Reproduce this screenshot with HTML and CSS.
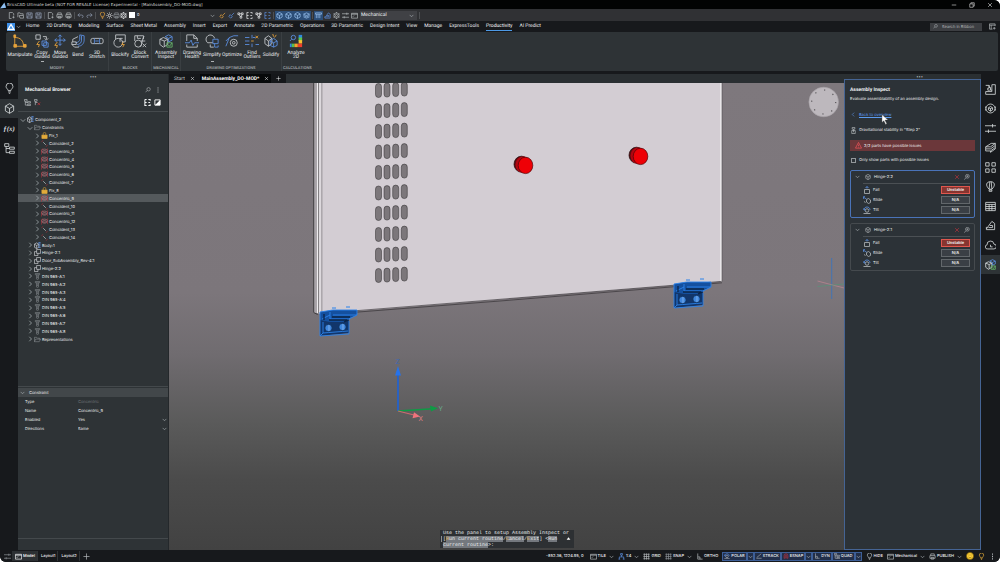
FILE: index.html
```html
<!DOCTYPE html>
<html lang="en">
<head>
<meta charset="utf-8">
<title>BricsCAD Ultimate</title>
<link rel="stylesheet" href="styles.css">
</head>
<body>
<svg class="sprite" aria-hidden="true">
  <defs>
    <symbol id="chev-r" viewBox="0 0 8 8"><path d="M3 1l3 3-3 3"/></symbol>
    <symbol id="chev-l" viewBox="0 0 8 8"><path d="M5 1L2 4l3 3"/></symbol>
    <symbol id="chev-d" viewBox="0 0 8 8"><path d="M1 3l3 3 3-3"/></symbol>
    <symbol id="new" viewBox="0 0 16 16"><path d="M3 1h7l3 3v4M3 1v14h5M10 12h5M12.500 9.500v5"/></symbol>
    <symbol id="open" viewBox="0 0 16 16"><path d="M2 12V2h5l1 2h6v3M5 8h10v6H7z"/></symbol>
    <symbol id="save" viewBox="0 0 16 16"><path d="M2 2h12v12H2zM5 2v4h6V2M4 14V9h8v5"/></symbol>
    <symbol id="print" viewBox="0 0 16 16"><path d="M4 6V2h8v4M2 6h12v6H2zM5 10h6v4H5z"/></symbol>
    <symbol id="undo" viewBox="0 0 16 16"><path d="M6 3L2 7l4 4M2 7h9c4 0 4 6 0 6"/></symbol>
    <symbol id="redo" viewBox="0 0 16 16"><path d="M10 3l4 4-4 4M14 7H5c-4 0-4 6 0 6"/></symbol>
    <symbol id="bulb" viewBox="0 0 16 16"><path d="M6 11c0-2-3-3-3-6a5 5 0 0 1 10 0c0 3-3 4-3 6zM6 13h4M7 15h2"/></symbol>
    <symbol id="sun" viewBox="0 0 16 16"><circle cx="8" cy="8" r="3"/><path d="M8 1v2M8 13v2M1 8h2M13 8h2M3 3l1.500 1.500M11.500 11.500L13 13M13 3l-1.500 1.500M4.500 11.500L3 13"/></symbol>
    <symbol id="lock" viewBox="0 0 16 16"><path d="M5 7V4a3 3 0 0 1 6 0v3"/><rect x="2" y="7" width="12" height="8" fill="currentColor"/></symbol>
    <symbol id="brush" viewBox="0 0 16 16"><path d="M14 2L8 8M5 6l5 5-4 3-4-4z"/></symbol>
    <symbol id="nodes" viewBox="0 0 16 16"><path d="M2 2h4v4H2zM10 2h4v4h-4zM7 10h4v4H7zM6 4h4M4 6l4 4M12 6l-3 4"/></symbol>
    <symbol id="scale" viewBox="0 0 16 16"><path d="M6 1h4v4H6zM8 5v4M3 14V9h10v5M1 14h4M11 14h4"/></symbol>
    <symbol id="ortho" viewBox="0 0 16 16"><path d="M4 1v13h11M4 9h5v5"/></symbol>
    <symbol id="track" viewBox="0 0 16 16"><path d="M1 14h14M2 12L14 2"/></symbol>
    <symbol id="magnet" viewBox="0 0 16 16"><path d="M3 14V7a5 5 0 0 1 10 0v7h-3V7a2 2 0 0 0-4 0v7z"/></symbol>
    <symbol id="cube" viewBox="0 0 16 16"><path d="M8 1l6 3.500v7L8 15l-6-3.500v-7zM2 4.500L8 8l6-3.500M8 8v7"/></symbol>
    <symbol id="bars" viewBox="0 0 16 16"><path d="M1 2h14v3H1zM3 5v9M7 5v9M11 5v9"/></symbol>
    <symbol id="stack" viewBox="0 0 16 16"><path d="M1 5l7-3 7 3-7 3zM1 8l7 3 7-3M1 11l7 3 7-3"/></symbol>
    <symbol id="gear" viewBox="0 0 16 16"><circle cx="8" cy="8" r="6"/><circle cx="8" cy="8" r="2.500"/><path d="M8 0v3M8 13v3M1 4l3 2M12 10l3 2M15 4l-3 2M4 10l-3 2"/></symbol>
    <symbol id="sliders" viewBox="0 0 16 16"><path d="M0 4h16M0 12h16M11 1.500v5M5 9.500v5"/></symbol>
    <symbol id="screen" viewBox="0 0 16 16"><path d="M1 3h14v11H1zM4 11l3-3M1 5h14"/></symbol>
    <symbol id="search" viewBox="0 0 16 16"><circle cx="9.500" cy="6" r="4.500"/><path d="M6 9l-4.500 5"/></symbol>
    <symbol id="ribbon-cfg" viewBox="0 0 16 16"><path d="M8 14H1V2h13v5M1 5h13M5 5v9M12 9v6M9 12h6"/></symbol>
    <symbol id="tree" viewBox="0 0 16 16"><path d="M1 1h6v4H1zM8 6h7v3H8zM8 12h7v3H8zM3 5v9h5M3 8h5"/></symbol>
    <symbol id="tree-x" viewBox="0 0 16 16"><path d="M1 1h6v4H1zM3 5v9M3 8h5"/><path class="red" d="M8 8l6 6M14 8l-6 6"/></symbol>
    <symbol id="sort" viewBox="0 0 16 16"><path d="M2 1h4M2 1v14h4M2 8h4M10 1h4v3M10 8h4M10 15h4v-3"/></symbol>
    <symbol id="dots" viewBox="0 0 16 16"><path d="M8 1v3M8 6.500v3M8 12v3"/></symbol>
    <symbol id="folder" viewBox="0 0 16 16"><path d="M1 13V3h5l2 2h5v3M1 13l3-6h11l-3 6z"/></symbol>
    <symbol id="coin" viewBox="0 0 16 16"><path class="red" d="M1 4l4-3M11 15l4-3"/><path d="M5 5l6 6"/></symbol>
    <symbol id="conc" viewBox="0 0 16 16"><path class="red" d="M1 15V4l3-3M15 1v13"/><ellipse cx="8" cy="6" rx="6" ry="3.500"/><path d="M2 8c0 5 12 5 12 0M5 6h6"/></symbol>
    <symbol id="parts" viewBox="0 0 16 16"><path d="M6 1h9v9H6zM1 6h5M1 6v9h8v-5"/></symbol>
    <symbol id="body" viewBox="0 0 16 16"><path d="M1 5l5-3 5 3v7l-5 3-5-3zM1 5l5 3 5-3M6 8v7"/><path class="blue thick" d="M10 2h5M10 7h5M10 12h5"/></symbol>
    <symbol id="screw" viewBox="0 0 16 16"><path d="M3 1h10v3H3zM6 4v10l2 1 2-1V4M6 7h4M6 10h4"/></symbol>
    <symbol id="assy" viewBox="0 0 16 16"><path d="M1 6l4-2 5 2v6l-5 3-4-3zM1 6l5 2 4-2M6 8v6"/><path class="blue" d="M7 3l4-2 4 2v4l-4 2M7 3l4 2 4-2M11 5v4"/><path class="green" d="M9 10h6v5H9zM10 12l2 2 3-4"/></symbol>
    <symbol id="puzzle" viewBox="0 0 16 16"><path d="M1 2h5v4H4v3h3M10 1h5v14H1v-4h9zM6 2v3h2v4h2"/></symbol>
    <symbol id="wheel" viewBox="0 0 16 16"><circle cx="8" cy="8" r="6.500"/><path d="M8 5l3 2v3l-3 2-3-2V7zM8 8v4M5 7l3 1 3-1M1 5L0 8l1 3M15 5l1 3-1 3"/></symbol>
    <symbol id="clip" viewBox="0 0 16 16"><path d="M1 7l8-5h6l-7 5zM1 7v3h7l7-5V2M1 10v3h7l7-5V5M8 13v2l7-5V8"/></symbol>
    <symbol id="grid4" viewBox="0 0 16 16"><path d="M1 1h5v5H1zM10 1h5v5h-5zM1 10h5v5H1zM10 10h5v5h-5z"/></symbol>
    <symbol id="balloon" viewBox="0 0 16 16"><path d="M6 12C0 6 2 1 8 1s8 5 2 11zM6 12l1-11M10 12L9 1M6 13h4v2H6z"/></symbol>
    <symbol id="table" viewBox="0 0 16 16"><path d="M1 2h14v12H1zM1 5h14M1 8h14M1 11h14M6 5v9M10 5v9"/></symbol>
    <symbol id="hash" viewBox="0 0 16 16"><path d="M1 3h14M1 8h14M1 13h14M3 1v14M8 1v14M13 1v14"/></symbol>
    <symbol id="clipper" viewBox="0 0 16 16"><path d="M2 13L10 2l4 3v9H2zM5 11h6M7 8h4v3M2 13v-3"/></symbol>
    <symbol id="cloud" viewBox="0 0 16 16"><path d="M4 13a3 3 0 0 1-1-6 5 5 0 0 1 10-1 3.500 3.500 0 0 1 0 7zM8 7v3h3"/></symbol>
    <symbol id="magnify" viewBox="0 0 16 16"><circle cx="9" cy="6" r="5"/><path d="M5 10l-4 5M9 3.500v5M6.500 6h5"/></symbol>
    <symbol id="cross" viewBox="0 0 16 16"><path d="M3 3l10 10M13 3L3 13"/></symbol>
    <symbol id="plus" viewBox="0 0 16 16"><path d="M8 1v14M1 8h14"/></symbol>
    <symbol id="min" viewBox="0 0 16 16"><path d="M2 8h12"/></symbol>
    <symbol id="restore" viewBox="0 0 16 16"><path d="M2 5h9v9H2zM5 5V2h9v9h-3"/></symbol>
    <symbol id="warn" viewBox="0 0 16 16"><path d="M8 1l7 13H1zM8 6v4M8 11.500v1"/></symbol>
    <symbol id="gravity" viewBox="0 0 16 16"><path d="M5 1h6v4H5zM4 8h8v7H4zM8 5v7"/></symbol>
    <symbol id="fall" viewBox="0 0 16 16"><path d="M3 7h10v8H3z"/><path class="blue" d="M5 4l3-3 3 3M8 1v4"/></symbol>
    <symbol id="slide" viewBox="0 0 16 16"><path d="M7 7l4-2 4 3v5l-4 2-4-3zM2 11l3 2"/><path class="blue" d="M0 2l7 4M4 1L0 2l1 4"/></symbol>
    <symbol id="tilt" viewBox="0 0 16 16"><circle cx="8" cy="9" r="3.500"/><path d="M1 15h14"/><path class="blue" d="M2 8c0-8 12-8 12 0M2 4v4h3"/></symbol>

    <symbol id="r-manip" viewBox="0 0 16 16"><path class="orange" d="M2 2l0 12h12M2 4c7 0 10 4 10 10"/><path class="orange fill" d="M1 1h2v3H1zM1 12h3v3H1zM12 12h3v3h-3z"/></symbol>
    <symbol id="r-copy" viewBox="0 0 16 16"><path d="M1 1h5v5H1zM9 3h4M13 3v3M11 5l2 2 2-2"/><path class="blue" d="M8 8h5v5H8zM10 10h5v5h-5z"/><path class="orange" d="M5 8l-3 4h3l-1 3"/></symbol>
    <symbol id="r-move" viewBox="0 0 16 16"><path class="blue" d="M8 1v12M2 7h12M6 3l2-2 2 2M4 5L2 7l2 2M12 5l2 2-2 2M6 11l2 2 2-2"/><path class="orange" d="M5 9l-3 4h3l-1 3"/></symbol>
    <symbol id="r-bend" viewBox="0 0 16 16"><path class="blue" d="M10 1l5 1v5c0 4-3 7-7 7M10 1v5c0 2-2 4-5 4M12 2v5c0 3-2 5-5 5"/><path d="M1 9h5v3H1zM1 12l3 3h5M8 3l-6 3v3"/></symbol>
    <symbol id="r-stretch" viewBox="0 0 16 16"><rect x="1" y="5" width="14" height="6" rx="2"/><path class="blue" d="M5 5v6M11 5v6M6 8h4"/></symbol>
    <symbol id="r-block" viewBox="0 0 16 16"><path d="M3 1h11v8h-4M3 1v5M8 5v4M8 5h3"/><circle cx="6" cy="10" r="5"/><path class="orange" d="M12 9l-2 3h3l-2 3"/></symbol>
    <symbol id="r-conv" viewBox="0 0 16 16"><path d="M2 2h10v4M2 2v6M5 2v3h4"/><circle cx="6" cy="11" r="4"/><path d="M13 3c-3 0-2 11-5 11M9 8h5M11 11l4 4M15 11l-4 4"/></symbol>
    <symbol id="r-health" viewBox="0 0 16 16"><path d="M2 8V1h8l4 4v3M10 1v4h4M2 12v3h12v-3"/><path class="blue" d="M0 10h5l2-3 2 6 2-3h5"/></symbol>
    <symbol id="r-simp" viewBox="0 0 16 16"><path d="M3 10a5 5 0 1 1 8-5M3 10h6M6 12v3h4"/><path class="blue" d="M9 6h6v5H9zM11 11v4h4v-2"/></symbol>
    <symbol id="r-opt" viewBox="0 0 16 16"><path class="blue" d="M1 14L5 4l5-2h5M1 8l4-4"/><circle cx="10" cy="10" r="4"/><circle cx="10" cy="10" r="1.500"/></symbol>
    <symbol id="r-find" viewBox="0 0 16 16"><path class="blue" d="M0 4h5M9 4h3M0 8h5M0 12h5M8 1v4M8 11v4M12 12h4"/><path class="orange" d="M12 2l3 3M15 2l-3 3M7 8h3"/></symbol>
    <symbol id="r-solid" viewBox="0 0 16 16"><path d="M1 5l4-3 4 3v6l-4 3-4-3zM1 5l4 3 4-3M5 8v6"/><path class="blue" d="M7 8l4-3 4 3v5l-4 2-4-2zM7 8l4 2 4-2M11 10v5"/><path class="orange" d="M10 0l1 3M14 1l-2 3"/></symbol>
    <symbol id="r-analyze" viewBox="0 0 16 16"><circle class="blue" cx="5" cy="4" r="2.500"/><path class="blue" d="M3 6L1 8"/><g stroke="none"><path d="M11 1h4v4h-4z" fill="#2f8be0"/><path d="M11 4h4v4h-4z" fill="#5fc64b"/><path d="M11 7h4v4h-4z" fill="#f4c430"/><path d="M10 11h5v4h-5z" fill="#ee3f2c"/><path d="M6 11h4v4H6z" fill="#f5a32a"/><path d="M3 11h3v4H3z" fill="#55bf50"/><path d="M1 11h2v4H1z" fill="#2f8be0"/></g></symbol>
    <g id="hinge">
      <path d="M0 8L29 6V25L0 28z" fill="#12366b"/>
      <path d="M0 4L12 2H37v5l-9 4-3 3H10L0 12z" fill="#14509f"/>
      <path d="M0 4v24l29-2V13M3 14v11l25-2M0 4l13-2h24v5l-8 4M10 4v7h20M13 7h24M2 11l8-4M0 28l3-3" fill="none" stroke="#2b82ea" stroke-width=".9"/>
      <path d="M4 6v6M9 12h18M12 9h18M24 14l4-2" stroke="#0b2447" stroke-width="1.300"/>
      <circle cx="8.500" cy="20" r="3.700" fill="#3f86dd" stroke="#0a2850" stroke-width=".8"/>
      <circle cx="22.500" cy="19" r="3.700" fill="#3f86dd" stroke="#0a2850" stroke-width=".8"/>
      <path d="M9 17v6M23 16v6" stroke="#8ab8ee" stroke-width=".8"/>
      <path d="M12 0h4M26-1h4" stroke="#2b82ea" stroke-width="1"/>
    </g>
    <g id="slots" fill="#7c777b" stroke="#2d2b2d" stroke-width=".5">
      <rect x="375.500" y="0" width="6" height="14" rx="3"/>
      <rect x="384" y="-.4" width="6" height="14" rx="3"/>
      <rect x="392.700" y="-.9" width="6" height="14" rx="3"/>
      <rect x="401.300" y="-1.400" width="6" height="14" rx="3"/>
    </g>
    <g id="knob">
      <ellipse cx="-1.500" cy="-.8" rx="7.500" ry="8" fill="#5c0a10" stroke="#1c0506" stroke-width=".7"/>
      <ellipse cx="0" cy="-.4" rx="7.500" ry="8.200" fill="#b10610"/>
      <ellipse cx="2.500" cy=".4" rx="7.300" ry="8.200" fill="#ee0006" stroke="#4d0508" stroke-width=".7"/>
    </g>
  </defs>
</svg>

<div class="app">
  <header class="titlebar">
    <svg class="app-mark" viewBox="0 0 8 8"><path d="M0 8L5 1l2 6z"/></svg>
    <span>BricsCAD Ultimate beta (NOT FOR RESALE License) Experimental - [MainAssembly_DO-MOD.dwg]</span>
    <div class="win-buttons">
      <button aria-label="Minimize"><svg class="ic"><use href="#min"/></svg></button>
      <button aria-label="Restore"><svg class="ic"><use href="#restore"/></svg></button>
      <button aria-label="Close"><svg class="ic"><use href="#cross"/></svg></button>
    </div>
  </header>

  <div class="quickbar">
    <button aria-label="New"><svg class="ic"><use href="#new"/></svg></button>
    <button aria-label="Open"><svg class="ic"><use href="#open"/></svg></button>
    <button aria-label="Save"><svg class="ic steel"><use href="#save"/></svg></button>
    <button aria-label="Save as"><svg class="ic steel"><use href="#save"/></svg></button>
    <i class="sep"></i>
    <button aria-label="Preview"><svg class="ic"><use href="#new"/></svg></button>
    <button aria-label="Print"><svg class="ic"><use href="#print"/></svg></button>
    <button aria-label="Publish"><svg class="ic"><use href="#print"/></svg></button>
    <i class="sep"></i>
    <button aria-label="Undo"><svg class="ic steel"><use href="#undo"/></svg></button>
    <button aria-label="Redo"><svg class="ic steel"><use href="#redo"/></svg></button>
    <i class="sep"></i>
    <button class="layer-combo" aria-label="Layer 0">
      <svg class="ic orange"><use href="#bulb"/></svg>
      <svg class="ic bright"><use href="#sun"/></svg>
      <svg class="ic dim"><use href="#print"/></svg>
      <svg class="ic bright"><use href="#gear"/></svg>
      <i class="swatch"></i>
      <span>0</span>
      <svg class="ic chev end"><use href="#chev-d"/></svg>
    </button>
    <button aria-label="Match"><svg class="ic orange"><use href="#brush"/></svg></button>
    <button aria-label="Edit"><svg class="ic blue"><use href="#brush"/></svg></button>
    <button aria-label="Select"><svg class="ic bright"><use href="#nodes"/></svg></button>
    <button aria-label="Isolate"><svg class="ic bright"><use href="#sort"/></svg></button>
    <button aria-label="Group"><svg class="ic bright"><use href="#nodes"/></svg></button>
    <button aria-label="Explode"><svg class="ic blue"><use href="#sort"/></svg></button>
    <i class="sep"></i>
    <button class="on" aria-label="Solid mode"><svg class="ic sky"><use href="#cube"/></svg></button>
    <button class="on" aria-label="Face mode"><svg class="ic sky"><use href="#cube"/></svg></button>
    <button class="on" aria-label="Edge mode"><svg class="ic sky"><use href="#cube"/></svg></button>
    <button class="on" aria-label="Stack mode"><svg class="ic sky"><use href="#stack"/></svg></button>
    <i class="sep"></i>
    <button class="on" aria-label="Columns"><svg class="ic sky"><use href="#bars"/></svg></button>
    <button aria-label="Clipping"><svg class="ic blue"><use href="#clipper"/></svg></button>
    <button aria-label="Settings"><svg class="ic"><use href="#gear"/></svg></button>
    <button aria-label="Options"><svg class="ic"><use href="#sliders"/></svg></button>
    <button aria-label="Screen"><svg class="ic"><use href="#screen"/></svg></button>
    <div class="select-wrap">
      <select aria-label="Workspace"><option>Mechanical</option></select>
      <svg class="ic chev"><use href="#chev-d"/></svg>
    </div>
    <i class="sep"></i>
  </div>

  <nav class="tabs">
    <button class="logo" aria-label="Application menu"><svg viewBox="0 0 8 8"><path d="M1 6.500L4 1.500l3 5z"/></svg></button>
    <svg class="ic chev dim"><use href="#chev-d"/></svg>
    <button class="tab">Home</button><button class="tab">2D Drafting</button><button class="tab">Modeling</button><button class="tab">Surface</button><button class="tab">Sheet Metal</button><button class="tab">Assembly</button><button class="tab">Insert</button><button class="tab">Export</button><button class="tab">Annotate</button><button class="tab">2D Parametric</button><button class="tab">Operations</button><button class="tab">3D Parametric</button><button class="tab">Design Intent</button><button class="tab">View</button><button class="tab">Manage</button><button class="tab">ExpressTools</button><button class="tab active">Productivity</button><button class="tab">AI Predict</button>
    <label class="search"><svg class="ic"><use href="#search"/></svg><input type="text" placeholder="Search in Ribbon" aria-label="Search in Ribbon"></label>
    <button class="cfg" aria-label="Ribbon settings"><svg class="ic"><use href="#ribbon-cfg"/></svg></button>
  </nav>

  <section class="ribbon">
    <div class="group">
      <div class="tools">
        <button class="tool wide"><svg><use href="#r-manip"/></svg><span>Manipulate</span></button>
        <button class="tool narrow"><svg><use href="#r-copy"/></svg><span>Copy<br>Guided</span><i class="more"></i></button>
        <button class="tool narrow"><svg><use href="#r-move"/></svg><span>Move<br>Guided</span></button>
        <button class="tool narrow"><svg><use href="#r-bend"/></svg><span>Bend</span></button>
        <button class="tool"><svg><use href="#r-stretch"/></svg><span>3D<br>Stretch</span></button>
      </div>
      <h3>MODIFY</h3>
    </div>
    <div class="group">
      <div class="tools">
        <button class="tool"><svg><use href="#r-block"/></svg><span>Blockify</span></button>
        <button class="tool"><svg><use href="#r-conv"/></svg><span>Block<br>Convert</span></button>
      </div>
      <h3>BLOCKS</h3>
    </div>
    <div class="group">
      <div class="tools">
        <button class="tool wide"><svg><use href="#assy"/></svg><span>Assembly<br>Inspect</span></button>
      </div>
      <h3>MECHANICAL</h3>
    </div>
    <div class="group">
      <div class="tools">
        <button class="tool"><svg><use href="#r-health"/></svg><span>Drawing<br>Health</span></button>
        <button class="tool"><svg><use href="#r-simp"/></svg><span>Simplify</span><i class="more"></i></button>
        <button class="tool"><svg><use href="#r-opt"/></svg><span>Optimize</span></button>
        <button class="tool"><svg><use href="#r-find"/></svg><span>Find<br>Outliers</span></button>
        <button class="tool narrow"><svg><use href="#r-solid"/></svg><span>Solidify</span></button>
      </div>
      <h3>DRAWING OPTIMIZATIONS</h3>
    </div>
    <div class="group">
      <div class="tools">
        <button class="tool wide"><svg><use href="#r-analyze"/></svg><span>Analyze<br>2D</span></button>
      </div>
      <h3>CALCULATIONS</h3>
    </div>
  </section>

  <div class="workspace">
    <nav class="rail left">
      <button aria-label="Tips"><svg><use href="#bulb"/></svg></button>
      <button class="active" aria-label="Mechanical Browser"><svg><use href="#cube"/></svg></button>
      <button class="fx" aria-label="Parameters">ƒ(x)</button>
      <button aria-label="Structure"><svg><use href="#tree"/></svg></button>
    </nav>

    <aside class="browser">
      <div class="grip">•••</div>
      <div class="panel-head"><h2>Mechanical Browser</h2>
        <button aria-label="Search"><svg class="ic"><use href="#search"/></svg></button>
        <button aria-label="Menu"><svg class="ic heavy"><use href="#dots"/></svg></button>
      </div>
      <div class="panel-tools">
        <button aria-label="Expand"><svg class="ic"><use href="#tree"/></svg></button>
        <button aria-label="Collapse"><svg class="ic"><use href="#tree-x"/></svg></button>
        <button class="end" aria-label="Sort"><svg class="ic bright heavy"><use href="#sort"/></svg></button>
        <button aria-label="Contrast"><svg class="contrast" viewBox="0 0 8 8"><path class="frame" d="M1 1h6v6H1z"/><path class="half" d="M7 1v6H1z"/></svg></button>
      </div>
      <ul class="tree">
        <li><button class="open"><svg class="ch"><use href="#chev-d"/></svg><svg><use href="#body"/></svg><span>Component_2</span></button></li>
        <li><button class="l1 open"><svg class="ch"><use href="#chev-d"/></svg><svg class="dim"><use href="#folder"/></svg><span>Constraints</span></button></li>
        <li><button class="l2"><svg class="ch"><use href="#chev-r"/></svg><svg class="gold"><use href="#lock"/></svg><span>Fix_1</span></button></li>
        <li><button class="l2"><svg class="ch"><use href="#chev-r"/></svg><svg><use href="#coin"/></svg><span>Coincident_2</span></button></li>
        <li><button class="l2"><svg class="ch"><use href="#chev-r"/></svg><svg class="pink"><use href="#conc"/></svg><span>Concentric_3</span></button></li>
        <li><button class="l2"><svg class="ch"><use href="#chev-r"/></svg><svg class="pink"><use href="#conc"/></svg><span>Concentric_4</span></button></li>
        <li><button class="l2"><svg class="ch"><use href="#chev-r"/></svg><svg class="pink"><use href="#conc"/></svg><span>Concentric_5</span></button></li>
        <li><button class="l2"><svg class="ch"><use href="#chev-r"/></svg><svg class="pink"><use href="#conc"/></svg><span>Concentric_6</span></button></li>
        <li><button class="l2"><svg class="ch"><use href="#chev-r"/></svg><svg><use href="#coin"/></svg><span>Coincident_7</span></button></li>
        <li><button class="l2"><svg class="ch"><use href="#chev-r"/></svg><svg class="gold"><use href="#lock"/></svg><span>Fix_8</span></button></li>
        <li><button class="l2 selected"><svg class="ch"><use href="#chev-r"/></svg><svg class="pink"><use href="#conc"/></svg><span>Concentric_9</span></button></li>
        <li><button class="l2"><svg class="ch"><use href="#chev-r"/></svg><svg><use href="#coin"/></svg><span>Coincident_10</span></button></li>
        <li><button class="l2"><svg class="ch"><use href="#chev-r"/></svg><svg class="pink"><use href="#conc"/></svg><span>Concentric_11</span></button></li>
        <li><button class="l2"><svg class="ch"><use href="#chev-r"/></svg><svg class="pink"><use href="#conc"/></svg><span>Concentric_12</span></button></li>
        <li><button class="l2"><svg class="ch"><use href="#chev-r"/></svg><svg><use href="#coin"/></svg><span>Coincident_13</span></button></li>
        <li><button class="l2"><svg class="ch"><use href="#chev-r"/></svg><svg><use href="#coin"/></svg><span>Coincident_14</span></button></li>
        <li><button class="l1"><svg class="ch"><use href="#chev-r"/></svg><svg><use href="#body"/></svg><span>Body:1</span></button></li>
        <li><button class="l1"><svg class="ch"><use href="#chev-r"/></svg><svg><use href="#parts"/></svg><span>Hinge-2:1</span></button></li>
        <li><button class="l1"><svg class="ch"><use href="#chev-r"/></svg><svg><use href="#parts"/></svg><span>Door_SubAssembly_Rev-4:1</span></button></li>
        <li><button class="l1"><svg class="ch"><use href="#chev-r"/></svg><svg><use href="#parts"/></svg><span>Hinge-2:2</span></button></li>
        <li><button class="l1"><svg class="ch"><use href="#chev-r"/></svg><svg class="dim"><use href="#screw"/></svg><span>DIN 965-A:1</span></button></li>
        <li><button class="l1"><svg class="ch"><use href="#chev-r"/></svg><svg class="dim"><use href="#screw"/></svg><span>DIN 965-A:2</span></button></li>
        <li><button class="l1"><svg class="ch"><use href="#chev-r"/></svg><svg class="dim"><use href="#screw"/></svg><span>DIN 965-A:3</span></button></li>
        <li><button class="l1"><svg class="ch"><use href="#chev-r"/></svg><svg class="dim"><use href="#screw"/></svg><span>DIN 965-A:4</span></button></li>
        <li><button class="l1"><svg class="ch"><use href="#chev-r"/></svg><svg class="dim"><use href="#screw"/></svg><span>DIN 965-A:5</span></button></li>
        <li><button class="l1"><svg class="ch"><use href="#chev-r"/></svg><svg class="dim"><use href="#screw"/></svg><span>DIN 965-A:6</span></button></li>
        <li><button class="l1"><svg class="ch"><use href="#chev-r"/></svg><svg class="dim"><use href="#screw"/></svg><span>DIN 965-A:7</span></button></li>
        <li><button class="l1"><svg class="ch"><use href="#chev-r"/></svg><svg class="dim"><use href="#screw"/></svg><span>DIN 965-A:8</span></button></li>
        <li><button class="l1"><svg class="ch"><use href="#chev-r"/></svg><svg class="dim"><use href="#folder"/></svg><span>Representations</span></button></li>
      </ul>
      <div class="props">
        <h3><svg class="ch"><use href="#chev-d"/></svg>Constraint</h3>
        <table>
          <tr><th>Type</th><td class="muted">Concentric</td></tr>
          <tr><th>Name</th><td>Concentric_9</td></tr>
          <tr><th><label for="enabled">Enabled</label></th><td><div class="cell"><select id="enabled"><option>Yes</option></select><svg class="ch"><use href="#chev-d"/></svg></div></td></tr>
          <tr><th><label for="directions">Directions</label></th><td><div class="cell"><select id="directions"><option>Same</option></select><svg class="ch"><use href="#chev-d"/></svg></div></td></tr>
        </table>
        <div class="props-foot"></div>
      </div>
    </aside>

    <main class="document">
      <div class="doc-tabs">
        <button>Start <svg class="ic bright"><use href="#cross"/></svg></button>
        <button class="active">MainAssembly_DO-MOD* <svg class="ic bright"><use href="#cross"/></svg></button>
        <button class="add" aria-label="New tab"><svg class="ic bright"><use href="#plus"/></svg></button>
      </div>
      <div class="viewport">
        <svg class="scene" viewBox="169 83 675 467" preserveAspectRatio="xMinYMin slice" role="img" aria-label="3D model of cabinet door with two hinges">
          <path d="M313.500 83h8v231l-6-1h-2z" fill="#a9a4a9"/>
          <path d="M313.700 83v229.500l4 2" fill="none" stroke="#2b292b" stroke-width=".8"/>
          <path d="M319 83H721.500V281.500L364 310.500L319 313.500z" fill="#d3cdd3"/>
          <path d="M317.500 83v230M319.800 83v230" stroke="#f7f5f7" stroke-width=".9"/>
          <path d="M318.700 83v230" stroke="#4d4a4d" stroke-width=".5"/>
          <path d="M321.800 83v229" stroke="#aaa5aa" stroke-width="1.500"/>
          <path d="M721 83v198.500" stroke="#fff" stroke-width="1"/>
          <path d="M722.200 83v198.500" stroke="#5a575a" stroke-width=".6"/>
          <path d="M721.500 281.400L500 299.300L352 311M722 282.800L500 301L352 312.500" fill="none" stroke="#2b292b" stroke-width=".6"/>
          <use href="#slots" y="83.500"/><use href="#slots" y="104"/><use href="#slots" y="124.500"/><use href="#slots" y="145"/><use href="#slots" y="165.500"/><use href="#slots" y="186"/><use href="#slots" y="206.500"/><use href="#slots" y="227.500"/><use href="#slots" y="248"/><use href="#slots" y="268.500"/>
          <use href="#knob" x="523" y="165"/>
          <use href="#knob" x="638" y="156"/>
          <use href="#hinge" x="320" y="308"/>
          <use href="#hinge" x="674" y="280"/>
          <circle cx="823.700" cy="102" r="14.800" fill="#bdb8bd" stroke="#a8a3a8" stroke-width=".6"/>
          <circle cx="823.700" cy="102" r="12" fill="none" stroke="#59565a" stroke-width="1.200" stroke-dasharray="1.200 8.225"/>
          <path d="M831.700 258v41" stroke="#3573c0" stroke-width=".8"/>
          <path d="M817.500 281l26.500 7" stroke="#b98490" stroke-width=".8"/>
          <path d="M817.500 286.500l26.500-2.500" stroke="#5a9079" stroke-width=".8"/>
          <path d="M398 411v-36" stroke="#1c62d8" stroke-width="1.600"/>
          <path d="M398 366l3 9.500h-6z" fill="#2673ea"/>
          <path d="M398 411l35-2.200" stroke="#0f9a45" stroke-width="1.400"/>
          <path d="M438 408.300l-8-2.800 1 6z" fill="#0f9a45"/>
          <path d="M398 411l16 4" stroke="#cf6a70" stroke-width="1.200"/>
          <path d="M420 416.500l-6-4.200-1.500 6z" fill="#f0737c"/>
          <text x="395.500" y="364" class="axis" fill="#4068b0">Z</text>
          <text x="438.500" y="411" class="axis" fill="#68a588">Y</text>
          <text x="418.500" y="421" class="axis" fill="#dc7c82">X</text>
        </svg>
        <div class="command">
          <i class="handle"></i>
          <p>Use the panel to setup Assembly Inspect or<br>[<mark><b>R</b>un current routine</mark>/<mark><b>C</b>ancel</mark>/<mark><b>E</b>xit</mark>] &lt;<mark>Run</mark><br><mark>current routine</mark>&gt;:</p>
          <button aria-label="Show history"><svg viewBox="0 0 8 8"><path d="M1 6l3-4 3 4z"/></svg></button>
        </div>
      </div>
    </main>

    <aside class="inspect">
      <div class="grip">•••</div>
      <div class="inspect-body">
        <h2>Assembly Inspect</h2>
        <p>Evaluate assemblability of an assembly design.</p>
        <div class="back"><svg class="ch blue"><use href="#chev-l"/></svg><a href="#">Back to overview</a>
          <svg class="cursor" viewBox="0 0 12 18"><path d="M1 1v13l3-3 3 6 2-1-3-6h5z"/></svg>
        </div>
        <div class="line"><svg class="ic"><use href="#gravity"/></svg>Gravitational stability in "Step 2"</div>
        <div class="alert"><svg class="ic"><use href="#warn"/></svg>2/2 parts have possible issues</div>
        <label class="check"><input type="checkbox">Only show parts with possible issues</label>
        <section class="card current">
          <header><svg class="ch"><use href="#chev-d"/></svg><svg class="ic"><use href="#cube"/></svg><h3>Hinge-2:2</h3><button aria-label="Remove"><svg class="ic red"><use href="#cross"/></svg></button><button aria-label="Zoom to"><svg class="ic"><use href="#magnify"/></svg></button></header>
          <hr>
          <div class="row"><svg class="ic"><use href="#fall"/></svg><span>Fall</span><button class="bad">Unstable</button></div>
          <div class="row"><svg class="ic"><use href="#slide"/></svg><span>Slide</span><button>N/A</button></div>
          <div class="row"><svg class="ic"><use href="#tilt"/></svg><span>Tilt</span><button>N/A</button></div>
        </section>
        <section class="card">
          <header><svg class="ch"><use href="#chev-d"/></svg><svg class="ic"><use href="#cube"/></svg><h3>Hinge-2:1</h3><button aria-label="Remove"><svg class="ic red"><use href="#cross"/></svg></button><button aria-label="Zoom to"><svg class="ic"><use href="#magnify"/></svg></button></header>
          <hr>
          <div class="row"><svg class="ic"><use href="#fall"/></svg><span>Fall</span><button class="bad">Unstable</button></div>
          <div class="row"><svg class="ic"><use href="#slide"/></svg><span>Slide</span><button>N/A</button></div>
          <div class="row"><svg class="ic"><use href="#tilt"/></svg><span>Tilt</span><button>N/A</button></div>
        </section>
      </div>
    </aside>

    <nav class="rail right">
      <button aria-label="Components"><svg><use href="#puzzle"/></svg></button>
      <button aria-label="Render"><svg><use href="#wheel"/></svg></button>
      <button aria-label="Properties"><svg><use href="#sliders"/></svg></button>
      <button aria-label="Layers"><svg><use href="#clip"/></svg></button>
      <button aria-label="Blocks"><svg><use href="#grid4"/></svg></button>
      <button aria-label="Point cloud"><svg><use href="#balloon"/></svg></button>
      <button aria-label="Sheets"><svg><use href="#table"/></svg></button>
      <button aria-label="Materials"><svg><use href="#clipper"/></svg></button>
      <button aria-label="Cloud"><svg><use href="#cloud"/></svg></button>
      <button class="active" aria-label="Assembly Inspect"><svg><use href="#assy"/></svg></button>
    </nav>
  </div>

  <footer class="status">
    <button class="menu" aria-label="Layouts"><svg class="ic dim"><use href="#sliders"/></svg></button>
    <button class="layout active"><svg class="ic bright"><use href="#screen"/></svg>Model</button>
    <button class="layout">Layout1</button>
    <button class="layout">Layout2</button>
    <button aria-label="New layout"><svg class="ic"><use href="#plus"/></svg></button>
    <span class="coords">-852.36, 1224.95, 0</span>
    <button><svg class="ic"><use href="#screen"/></svg>TILE<svg class="ch"><use href="#chev-d"/></svg></button>
    <button><svg class="ic blue"><use href="#scale"/></svg>1:4<svg class="ch"><use href="#chev-d"/></svg></button>
    <button><svg class="ic"><use href="#hash"/></svg>GRID</button>
    <button><svg class="ic dim"><use href="#hash"/></svg>SNAP<svg class="ch"><use href="#chev-d"/></svg></button>
    <button><svg class="ic"><use href="#ortho"/></svg>ORTHO</button>
    <div class="toggles">
      <button><svg class="ic"><use href="#tilt"/></svg>POLAR</button><button class="drop" aria-label="Polar options"><svg class="ch"><use href="#chev-d"/></svg></button>
      <button><svg class="ic"><use href="#track"/></svg>STRACK</button>
      <button><svg class="ic red"><use href="#magnet"/></svg>ESNAP</button><button class="drop" aria-label="Snap options"><svg class="ch"><use href="#chev-d"/></svg></button>
      <button><svg class="ic"><use href="#ortho"/></svg>DYN</button>
      <button><svg class="ic"><use href="#tree"/></svg>QUAD</button><button class="drop" aria-label="Quad options"><svg class="ch"><use href="#chev-d"/></svg></button>
    </div>
    <button><svg class="ic"><use href="#bulb"/></svg>HIDE</button>
    <button><svg class="ic"><use href="#screen"/></svg>Mechanical<svg class="ch"><use href="#chev-d"/></svg></button>
    <button><svg class="ic"><use href="#print"/></svg>PUBLISH<svg class="ch"><use href="#chev-d"/></svg></button>
    <button class="smile" aria-label="Feedback"><svg viewBox="0 0 8 8"><circle cx="4" cy="4" r="3.500"/><path d="M2.500 5c1 1 2 1 3 0M3 2.500v1M5 2.500v1"/></svg></button>
    <button aria-label="Hints"><svg class="ic gold"><use href="#bulb"/></svg></button>
    <button aria-label="More"><svg class="ic heavy"><use href="#dots"/></svg></button>
  </footer>
</div>
</body>
</html>
```
FILE: styles.css
```css
* { box-sizing: border-box; }

body {
  margin: 0;
  background: #fff;
  color: #eceef0;
  font: 4px/6px Inter, "Open Sans", sans-serif;
  text-rendering: geometricPrecision;
}

h2, h3, p, ul, table { margin: 0; padding: 0; font: inherit; }
ul { list-style: none; }

button, input, select {
  margin: 0;
  padding: 0;
  border: 0;
  background: none;
  color: inherit;
  font: inherit;
  text-rendering: inherit;
}

select { appearance: none; width: 100%; outline: 0; }

svg {
  fill: none;
  stroke: currentColor;
  stroke-width: 1.3;
  flex: none;
}

.sprite { position: absolute; width: 0; height: 0; }
.ic { display: block; width: 7px; height: 7px; color: #b3b7ba; stroke-width: 1.6; }
.ch, .ic.chev { width: 5px; height: 5px; color: #aab0b4; stroke-width: 1; }
.heavy { stroke-width: 2.4; }
.thick { stroke-width: 2.4; }
.fill { fill: #e8a33c; }
.dim { color: #8a8f93; }
.bright { color: #f2f4f5; }
.steel { color: #8f9bb0; }
.sky { color: #9cc4f0; }
.blue { color: #5b8fe0; stroke: #5b8fe0; }
.red { color: #c8323c; stroke: #c8323c; }
.green { stroke: #67b36a; }
.orange { color: #e8a33c; stroke: #e8a33c; }
.gold { color: #e2ab3a; }
.pink { color: #c98088; }

.app {
  display: flex;
  flex-direction: column;
  height: 100vh;
  overflow: hidden;
  border-radius: 0 6px 6px 6px;
  background: #17191c;
}

/* Title bar */
.titlebar {
  display: flex;
  align-items: center;
  height: 9px;
  background: #020303;
  color: #d8d8d8;
  font-family: "DejaVu Sans", sans-serif;
}
.app-mark { width: 7px; height: 8px; fill: #8fc0f2; stroke: none; }
.win-buttons { display: flex; gap: 12px; margin-left: auto; padding-right: 7px; }
.win-buttons .ic { width: 6px; height: 6px; color: #e2e2e2; }

/* Quick access toolbar */
.quickbar {
  display: flex;
  align-items: center;
  height: 12px;
  padding-left: 7px;
  background: #303134;
}
.quickbar > button { display: grid; place-items: center; width: 9px; height: 9px; }
.quickbar > .on { background: #2c4e78; }
.sep { width: 1px; height: 7px; margin: 0 1px; background: #4e5053; flex: none; }
.quickbar > .layer-combo { display: flex; width: 119px; margin: 0 1px; padding-left: 1px; }
.swatch { width: 6px; height: 6px; margin: 0 2px; background: #fff; }
.quickbar .end { margin-left: auto; margin-right: 2px; }
.select-wrap { display: flex; align-items: center; width: 57px; height: 9px; margin: 0 1px; padding: 0 3px 0 1px; background: #404145; font: 5px/8px Roboto, sans-serif; }

/* Ribbon tabs */
.tabs {
  display: flex;
  align-items: center;
  height: 11px;
  padding: 0 4px 0 7px;
  font: 5px/8px Roboto, sans-serif;
}
.logo { width: 8px; height: 8px; background: #3d8fe8; }
.logo svg { display: block; width: 8px; height: 8px; stroke: #fff; }
.tabs > .chev { margin: 0 5px 0 1px; }
.tab { height: 9px; margin-right: 7px; border-bottom: 1px solid transparent; white-space: nowrap; }
.tab.active { border-color: #4d9ae6; color: #fff; }
.search {
  display: flex;
  align-items: center;
  gap: 4px;
  width: 52px;
  height: 8px;
  margin-left: auto;
  padding-left: 3px;
  background: #3c3e42;
  font: 4px/6px Inter, sans-serif;
}
.search .ic { width: 5px; height: 5px; }
.search input { width: 38px; outline: 0; }
.search input::placeholder { color: #b4b7ba; opacity: 1; }
.cfg { margin-left: 7px; }

/* Ribbon */
.ribbon {
  display: flex;
  height: 39px;
  margin: 0 2px 3px 6px;
  border-radius: 2px;
  background: #2e3336;
}
.group { display: flex; flex-direction: column; padding: 2px 1px 0; border-right: 1px solid #3a3f42; }
.group:last-child { border: 0; }
.tools { display: flex; }
.tool {
  display: flex;
  flex-direction: column;
  align-items: center;
  width: 20px;
  height: 31px;
  font: 5px/4px Roboto, sans-serif;
}
.tool.narrow { width: 18px; }
.tool.wide { width: 26px; }
.tool svg { width: 14px; height: 14px; stroke-width: 1; color: #c3c7ca; }
.tool span { display: grid; align-content: center; flex: 0 0 13px; white-space: nowrap; }
.more { width: 3px; height: 1px; background: #aeb2b5; }
.group h3 { text-align: center; font: 500 4px/5px Roboto, sans-serif; color: #a7abae; white-space: nowrap; }

/* Work area */
.workspace {
  display: grid;
  grid-template-columns: 18px 151px minmax(0, 1fr) 137px 19px;
  flex: 1;
  min-height: 0;
}

.rail { display: flex; flex-direction: column; padding-top: 5px; color: #d6dadc; }
.rail.right { padding-top: 6px; }
.rail button { display: grid; place-items: center; height: 19px; margin-bottom: 1px; }
.rail.right button:nth-child(odd) { margin-bottom: 0; }
.rail svg { width: 11px; height: 11px; stroke-width: 1.2; }
.rail .active { background: #2e3336; }
.rail .fx { font: italic bold 7px/8px "Liberation Serif", serif; }

.grip { height: 5px; text-align: center; line-height: 5px; color: #d0d3d5; }

/* Mechanical browser */
.browser { display: flex; flex-direction: column; background: #2e3336; border-right: 1px solid #24282b; }
.panel-head { display: flex; align-items: center; gap: 4px; height: 21px; padding: 0 7px; }
.panel-head h2 { flex: 1; font: 700 5px/8px Roboto, sans-serif; color: #f0f2f3; }
.panel-head .ic { width: 6px; height: 6px; }
.panel-tools { display: flex; align-items: center; gap: 3px; height: 12px; margin-bottom: 4px; padding: 0 7px 6px 6px; border-bottom: 1px solid #454a4d; }
.panel-tools .end { margin-left: auto; }
.contrast { display: block; width: 7px; height: 7px; }
.contrast .half { fill: #fff; stroke: none; }
.contrast .frame { stroke: #fff; stroke-width: 1; }

.tree { display: grid; grid-auto-rows: 1fr; height: 227px; }
.tree button { display: flex; align-items: center; width: 100%; height: 100%; padding-left: 2px; line-height: 7px; }
.tree .l1 { padding-left: 9px; }
.tree .l2 { padding-left: 16px; }
.tree .selected { background: #54595c; }
.tree svg { width: 7px; height: 7px; margin-right: 1px; }
.tree .ch { width: 6px; height: 6px; }

.props { flex: 1; display: flex; flex-direction: column; margin-top: 43px; border-top: 1px solid #44494c; }
.props h3 { display: flex; align-items: center; gap: 4px; height: 9px; margin: 1px 0 0; padding-left: 2px; background: #42474a; }
.props table { width: 100%; border-spacing: 0; table-layout: fixed; }
.props tr { height: 9px; }
.props th { width: 60px; padding: 0 0 0 7px; font-weight: 400; text-align: left; }
.props td { padding: 0; }
.props .muted { color: #6f7478; }
.cell { display: flex; align-items: center; padding-right: 1px; }
.props-foot { flex: 1; margin-bottom: 11px; border-bottom: 1px solid #44494c; }

/* Document */
.document { display: flex; flex-direction: column; background: #2a2f32; }
.doc-tabs { display: flex; height: 9px; font: 5px/8px Roboto, sans-serif; }
.doc-tabs button { display: flex; align-items: center; gap: 5px; padding: 0 5px; background: #15171a; color: #c9cccf; }
.doc-tabs .active { padding: 0 2px; background: #07090a; color: #fff; font-weight: 700; }
.doc-tabs .ic { width: 5px; height: 5px; }
.viewport {
  position: relative;
  flex: 1;
  overflow: hidden;
  background: linear-gradient(#7e787d 0%, #7c767b 45%, #706c70 58%, #5a5a5a 73%, #4b4b4b 85%, #424242 100%);
}
.scene { position: absolute; width: 100%; height: 100%; stroke: none; }
.axis { font: 7px Roboto, sans-serif; }

.command {
  position: absolute;
  left: 271px;
  bottom: 2px;
  width: 134px;
  height: 18px;
  padding: 0 0 0 3px;
  background: #2d3033;
  color: #e8eaeb;
  font: 5px/6px "Liberation Mono", monospace;
}
.command p { white-space: nowrap; }
.command mark { background: #74787e; color: inherit; }
.command b { font-weight: 400; color: #e5b95a; }
.command button { position: absolute; right: 3px; top: 6px; }
.command button svg { display: block; width: 5px; height: 5px; fill: #fff; stroke: none; }
.handle { position: absolute; left: 1px; top: 6px; width: 1px; height: 6px; background: #8a8e91; }

/* Assembly inspect */
.inspect { display: flex; flex-direction: column; background: #2a2f32; }
.inspect .grip { padding-left: 14px; }
.inspect-body {
  flex: 1;
  padding: 6px 5px 0;
  border: 1px solid #456494;
  background: #2c3237;
}
.inspect h2 { font: 700 5px/8px Roboto, sans-serif; color: #f0f2f3; }
.inspect p { margin-top: 1px; line-height: 8px; }
.back { position: relative; display: flex; align-items: center; gap: 3px; margin: 8px 0; padding-left: 1px; line-height: 7px; }
.back a { color: #5b9bf0; }
.cursor { position: absolute; left: 31px; top: 3px; width: 8px; height: 11px; fill: #fff; stroke: #333; stroke-width: .6; }
.line { display: flex; align-items: center; gap: 2px; height: 8px; margin-bottom: 6px; }
.alert { display: flex; align-items: center; gap: 2px; height: 11px; padding-left: 5px; background: #6b373a; }
.alert .ic { color: #f0555a; }
.check { display: flex; align-items: center; gap: 3px; height: 8px; margin: 5px 0 6px; padding-left: 1px; }
.check input { appearance: none; width: 5px; height: 5px; border: 1px solid #92979b; }

.card { display: grid; gap: 2px; height: 48px; margin-bottom: 5px; padding: 1px 4px 0; border: 1px solid #454a4e; border-radius: 2px; align-content: start; }
.card.current { border-color: #4a73b8; }
.card header { display: flex; align-items: center; height: 9px; }
.card header .ch { margin-right: 5px; }
.card h3 { flex: 1; margin-left: 3px; }
.card header button { margin-left: 4px; }
.card header .ic { width: 6px; height: 6px; }
.card hr { width: 107px; height: 1px; margin: 0 0 0 auto; border: 0; background: #4b5054; }
.row { display: flex; align-items: center; gap: 2px; height: 8px; padding-left: 8px; }
.row .ic { width: 8px; height: 8px; }
.row span { flex: 1; }
.row button { width: 29px; height: 8px; border: 1px solid #62676b; background: #3a3f45; color: #f1f3f4; font-weight: 600; line-height: 6px; }
.row .bad { border-color: #e0574e; background: #873530; }

/* Status bar */
.status { display: flex; align-items: center; height: 12px; padding: 0 4px; font-weight: 500; background: #17191c; }
.status button { display: flex; align-items: center; gap: 1px; margin-right: 4px; white-space: nowrap; }
.status button:last-child { margin: 0; }
.status .ch { margin-left: 2px; }
.status .menu { margin-right: 1px; }
.status .layout { height: 10px; padding-right: 2px; margin-right: 3px; border-right: 1px solid #303437; }
.status .layout.active { background: #2c3033; color: #fff; padding-left: 3px; }
.coords { margin-left: auto; margin-right: 6px; white-space: nowrap; }
.toggles { display: flex; margin-right: 4px; }
.toggles button { height: 9px; margin: 0; padding: 0 1px; border: 1px solid #3d5f98; background: #222f4a; }
.status .toggles .drop { padding: 0; }
.toggles .ic { width: 6px; height: 6px; }
.status .toggles .ch { margin: 0; }
.smile svg { width: 8px; height: 8px; fill: #ffd23c; stroke: #7a5a00; stroke-width: .7; }
```
